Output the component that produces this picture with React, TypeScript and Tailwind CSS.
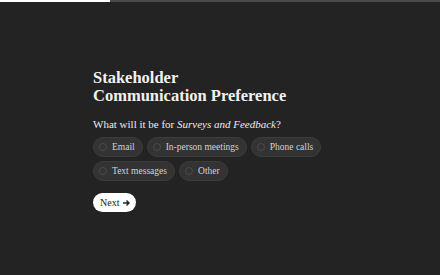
const options = ['Email', 'In-person meetings', 'Phone calls', 'Text messages', 'Other'];

export default function App() {
  return (
    <div
      className="w-[440px] h-[275px] bg-[#232323] flex flex-col overflow-hidden"
      style={{ fontFamily: '"Liberation Serif", "DejaVu Serif", serif' }}
    >
      {/* Progress */}
      <div className="h-[2px] bg-[#4b4b4b] flex">
        <div className="w-[110px] bg-white" />
      </div>

      <div className="pl-[93px] pt-[67px] pr-[80px]">
        <h1 className="text-[16.5px] leading-[18px] font-bold text-[#f1f1f1]">
          Stakeholder
          <br />
          Communication Preference
        </h1>
        <p className="mt-[12px] text-[11px] leading-[14px] text-[#ececec]">
          What will it be for <em>Surveys and Feedback</em>?
        </p>

        <div className="mt-[6px] flex flex-wrap gap-[4px]">
          {options.map((o) => (
            <button
              key={o}
              className="h-[20px] flex items-center gap-[5px] pl-[5px] pr-[7px] rounded-full bg-[#333333] border border-[#3c3c3c] text-[9.5px] text-[#d2d2d2]"
            >
              <span className="w-[8px] h-[8px] rounded-full border border-[#4a4a4a]" />
              {o}
            </button>
          ))}
        </div>

        <button className="mt-[12px] h-[19px] pl-[7px] pr-[6px] rounded-full bg-white text-[#222] text-[10px] flex items-center gap-[3px]">
          Next
          <svg width="8" height="8" viewBox="0 0 8 8" fill="none" stroke="#222" strokeWidth="1.4">
            <path d="M1 4h6M4.5 1.5L7 4L4.5 6.5" />
          </svg>
        </button>
      </div>
    </div>
  );
}
